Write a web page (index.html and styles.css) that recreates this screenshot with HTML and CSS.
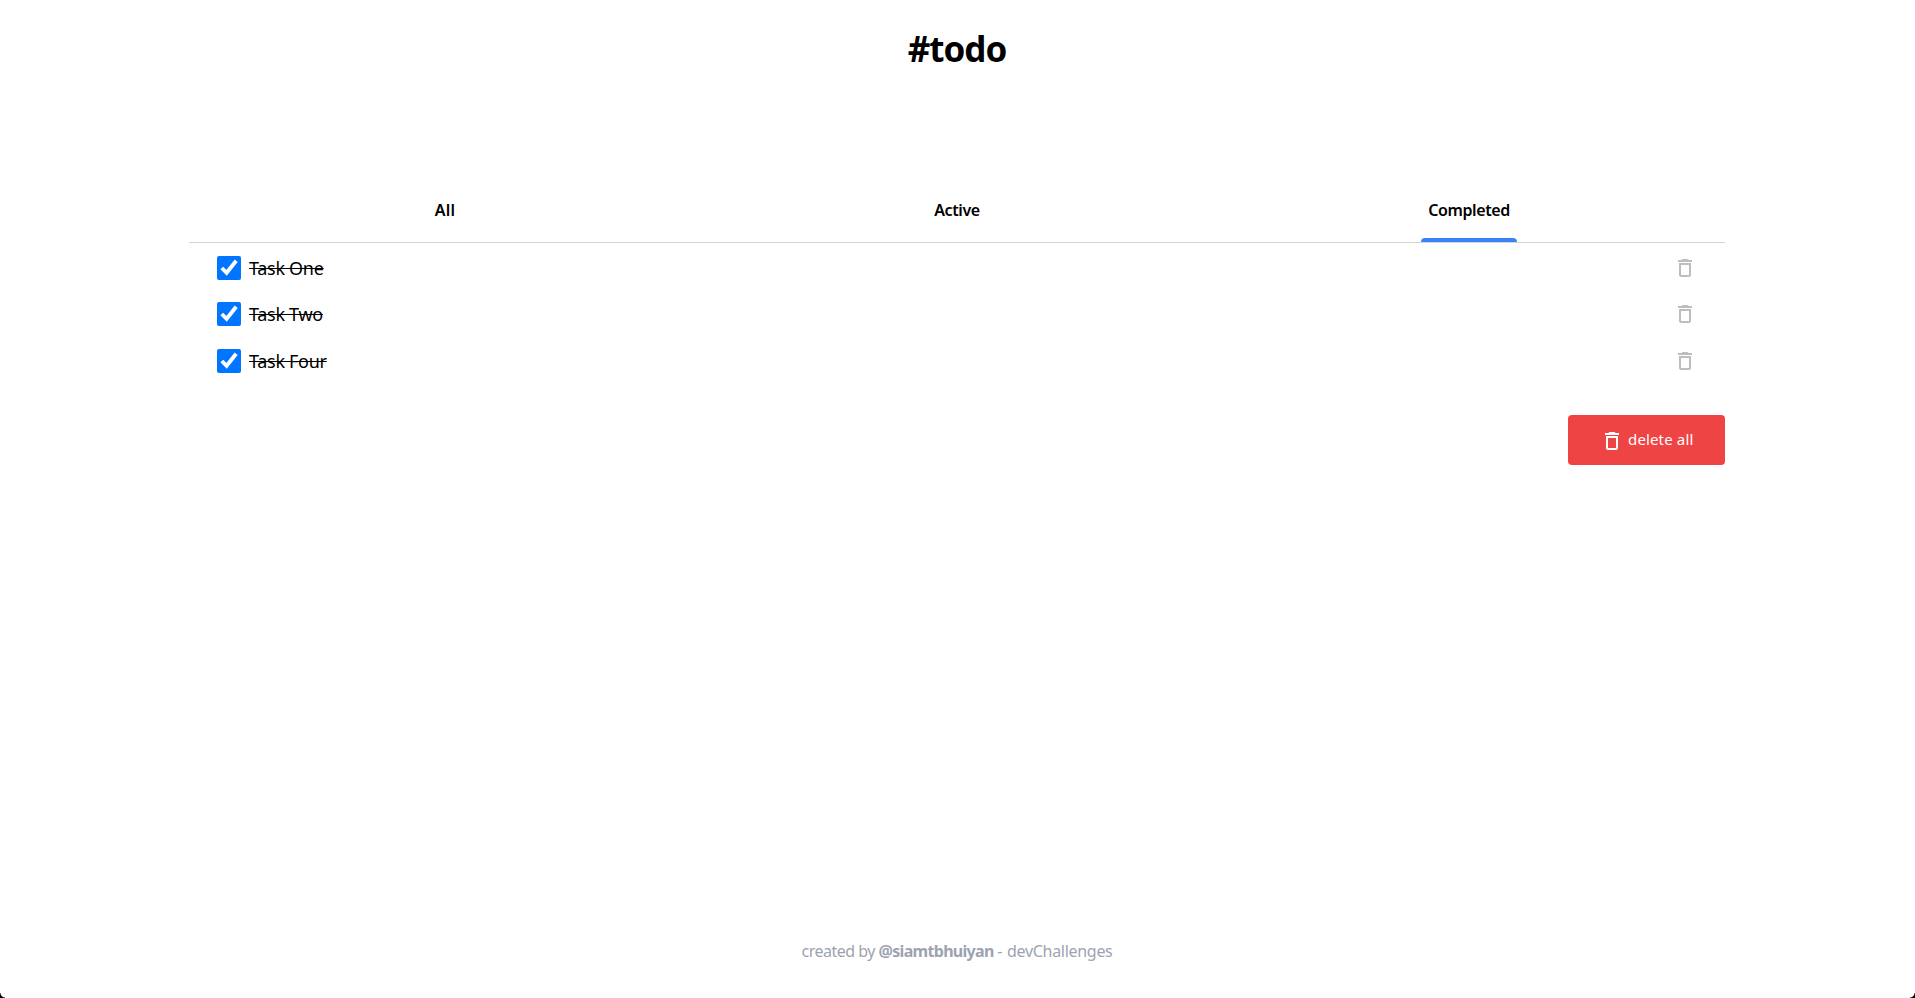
FILE: index.html
```html
<!DOCTYPE html>
<html lang="en">
<head>
<meta charset="utf-8">
<title>#todo</title>
<link rel="stylesheet" href="styles.css">
</head>
<body>
<svg class="sprite" aria-hidden="true">
  <symbol id="trash" viewBox="0 0 24 24"><path d="M16 9v10H8V9h8m-1.500-6h-5l-1 1H5v2h14V4h-3.500l-1-1zM18 7H6v12c0 1.100.9 2 2 2h8c1.100 0 2-.9 2-2V7z"/></symbol>
</svg>
<div class="app">
  <h1 class="title">#todo</h1>
  <main class="container">
    <nav class="tabs">
      <a class="tab tab-short">All</a>
      <a class="tab">Active</a>
      <a class="tab tab-active">Completed</a>
    </nav>
    <ul class="tasks">
      <li class="task"><label class="task-label"><input class="check" type="checkbox" checked><span class="task-name">Task One</span></label><svg class="icon"><use href="#trash"/></svg></li>
      <li class="task"><label class="task-label"><input class="check" type="checkbox" checked><span class="task-name">Task Two</span></label><svg class="icon"><use href="#trash"/></svg></li>
      <li class="task"><label class="task-label"><input class="check" type="checkbox" checked><span class="task-name">Task Four</span></label><svg class="icon"><use href="#trash"/></svg></li>
    </ul>
    <button class="delete-all"><svg class="icon icon-light"><use href="#trash"/></svg><span class="delete-text">delete all</span></button>
  </main>
  <footer class="footer">created by <b class="author">@siamtbhuiyan</b> <span class="site">- devChallenges</span></footer>
</div>
<i class="corner corner-left"></i>
<i class="corner corner-right"></i>
</body>
</html>
```
FILE: styles.css
```css
* { box-sizing: border-box; }
body { margin: 0; background: #fff; color: #000; font: 16px/24px "Noto Sans", sans-serif; overflow: hidden; }
.sprite { display: none; }
.app { width: 1914px; height: 998px; display: flex; flex-direction: column; align-items: center; }
.title { margin: 29px 0 0; font-size: 35px; font-weight: 700; line-height: 40px; letter-spacing: -1px; }
.container { width: 1536px; margin: 113px 0 0; display: flex; flex-direction: column; }
.tabs { display: grid; grid-template-columns: repeat(3, 1fr); justify-items: center; height: 61px; border-bottom: 1px solid #d1d5db; }
.tab { width: 96px; padding-top: 16px; text-align: center; font-weight: 600; letter-spacing: -.4px; }
.tab-short { letter-spacing: .2px; }
.tab-active { position: relative; }
.tab-active::after { content: ""; position: absolute; left: 0; right: 0; bottom: 0; height: 4px; border-radius: 4px 4px 0 0; background: #3b82f6; }
.tasks { list-style: none; margin: 13px 0 0; padding: 0 28px; display: flex; flex-direction: column; gap: 22.400px; }
.task { height: 24px; display: flex; align-items: center; justify-content: space-between; }
.task:last-child { margin-top: .2px; }
.task-label { display: flex; align-items: center; gap: 8px; }
.check { width: 24px; height: 24px; margin: 0; }
.task-name { font-size: 18px; line-height: 24px; letter-spacing: -.3px; text-decoration: line-through; }
.icon { width: 24px; height: 24px; fill: #bdbdbd; }
.icon-light { fill: #fff; }
.delete-all { align-self: flex-end; width: 157px; height: 50px; margin-top: 42px; padding: 0 0 0 32px; display: flex; align-items: center; gap: 4px; border: 0; border-radius: 4px; background: #ef4444; color: #fff; font: 15px/24px "Noto Sans", sans-serif; }
.delete-all .icon { margin-top: 2px; }
.delete-text { margin-bottom: 2px; letter-spacing: .15px; }
.footer { margin-top: auto; padding-bottom: 35px; color: #9ca3af; letter-spacing: -.5px; }
.author { letter-spacing: -.7px; }
.site { letter-spacing: -.3px; word-spacing: 1px; }
.corner { position: fixed; bottom: 0; width: 5px; height: 5px; }
.corner-left { left: 0; background: radial-gradient(circle at 100% 0, transparent 4px, #000 5px); }
.corner-right { right: 0; background: radial-gradient(circle at 0 0, transparent 4px, #000 5px); }
```
